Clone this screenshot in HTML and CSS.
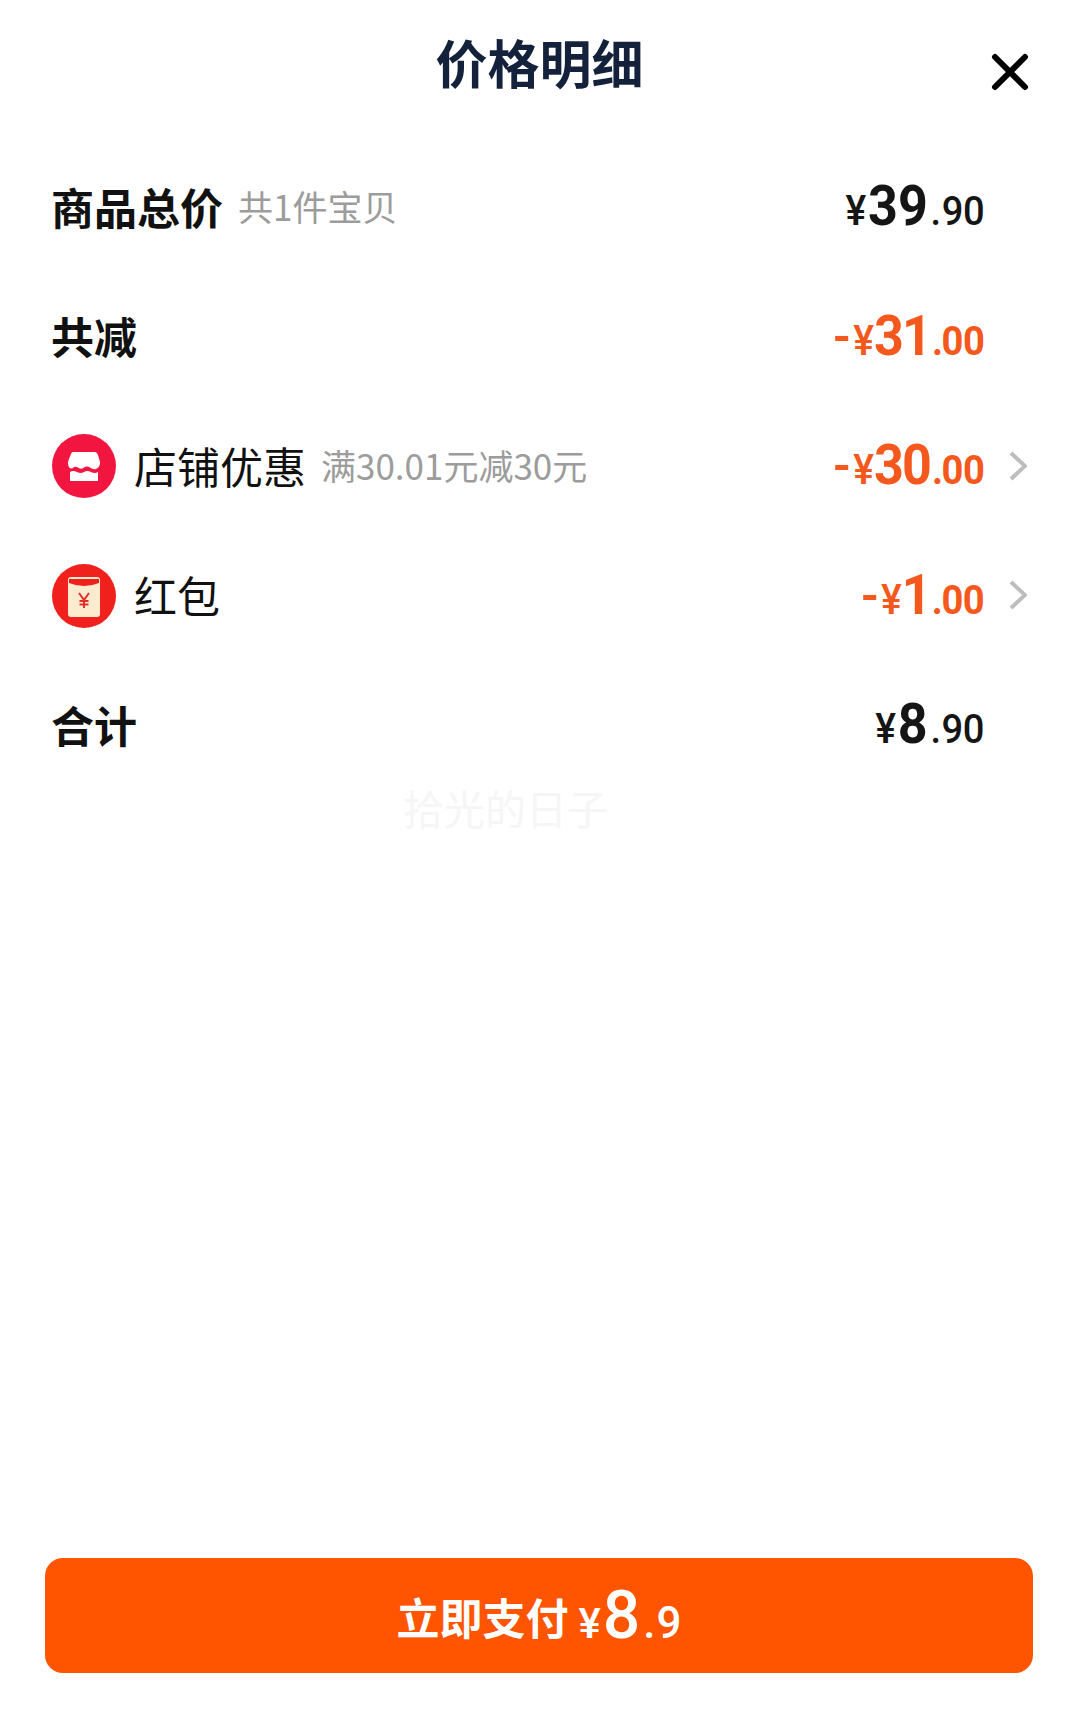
FILE: index.html
```html
<!DOCTYPE html>
<html lang="zh-CN">
<head>
<meta charset="utf-8">
<title>价格明细</title>
<link rel="stylesheet" href="styles.css">
</head>
<body>
<div class="page">
  <header class="header">
    <h1 class="title">价格明细</h1>
    <svg class="close" viewBox="0 0 38 38" width="38" height="38"><path d="M4 4 34 34M34 4 4 34"/></svg>
  </header>
  <main class="list">
    <div class="row">
      <div class="label"><span class="name strong">商品总价</span><span class="note">共1件宝贝</span></div>
      <div class="price"><span class="yen">¥</span><span class="big">39</span><span class="small"><i class="dot">.</i>90</span></div>
      <span class="slot"></span>
    </div>
    <div class="row">
      <div class="label"><span class="name strong">共减</span></div>
      <div class="price minus"><span class="dash">-</span><span class="yen">¥</span><span class="big">31</span><span class="small"><i class="dot">.</i>00</span></div>
      <span class="slot"></span>
    </div>
    <div class="row">
      <div class="label">
        <svg class="badge" viewBox="0 0 64 64" width="64" height="64">
          <circle cx="32" cy="32" r="32" fill="#f21540"/>
          <path d="M21 18H43Q45 18 46 21L48 28Q48.500 33 44 35Q41 36 38 33.500Q35 31.500 32 33.500Q29 36 26 33.500Q23 31.500 20 34.500Q16 34.500 16 29Q16 27 17 25L19 20Q19.500 18 21 18Z" fill="#fff"/>
          <path d="M18 38Q21 36 25 38T32 38T39 38T46 38V47H18Z" fill="#fff"/>
        </svg>
        <span class="name">店铺优惠</span><span class="note">满30.01元减30元</span>
      </div>
      <div class="price minus"><span class="dash">-</span><span class="yen">¥</span><span class="big">30</span><span class="small"><i class="dot">.</i>00</span></div>
      <svg class="slot chevron" viewBox="0 0 43 30" width="43" height="30"><path d="M27 2 41 15 27 28"/></svg>
    </div>
    <div class="row">
      <div class="label">
        <svg class="badge" viewBox="0 0 64 64" width="64" height="64">
          <circle cx="32" cy="32" r="32" fill="#f0201c"/>
          <rect x="16" y="13" width="32" height="40" rx="3" fill="#fdebcf"/>
          <path d="M17 15H47V19Q32 25 17 19Z" fill="#f0201c"/>
          <path d="M27 29 32 36 37 29M32 36V44M27.500 37H36.500M27.500 40.500H36.500" fill="none" stroke="#e0302a" stroke-width="2"/>
        </svg>
        <span class="name">红包</span>
      </div>
      <div class="price minus"><span class="dash">-</span><span class="yen">¥</span><span class="big">1</span><span class="small"><i class="dot">.</i>00</span></div>
      <svg class="slot chevron" viewBox="0 0 43 30" width="43" height="30"><path d="M27 2 41 15 27 28"/></svg>
    </div>
    <div class="row">
      <div class="label"><span class="name strong">合计</span></div>
      <div class="price"><span class="yen">¥</span><span class="big">8</span><span class="small"><i class="dot">.</i>90</span></div>
      <span class="slot"></span>
    </div>
  </main>
  <div class="watermark">拾光的日子</div>
  <footer class="footer">
    <button class="pay"><span class="pay-text">立即支付</span><span class="pay-price"><span class="pay-yen">¥</span><span class="pay-big">8</span><span class="pay-small"><i class="dot">.</i>9</span></span></button>
  </footer>
</div>
</body>
</html>
```
FILE: styles.css
```css
* { box-sizing: border-box; }
html, body { margin: 0; padding: 0; background: #fff; }
body { font-family: "Noto Sans CJK SC", "Noto Sans", sans-serif; color: #111; }
.page { position: relative; display: flex; flex-direction: column; width: 1079px; height: 1716px; overflow: hidden; }

.header { position: relative; display: flex; justify-content: center; height: 143px; padding-top: 27px; }
.title { margin: 0; font-size: 52px; line-height: 70px; font-weight: 700; color: #14213a; }
.close { position: absolute; right: 50px; top: 53px; }
.close path { fill: none; stroke: #000; stroke-width: 6; stroke-linecap: round; }

.list { display: flex; flex-direction: column; margin-top: -1px; padding: 0 52px; }
.row { display: flex; align-items: center; height: 129.500px; }
.label { display: flex; align-items: center; flex: 1; margin-left: -1px; padding-bottom: 2px; }
.name { font-size: 43px; line-height: 60px; font-weight: 400; color: #111; }
.strong { font-weight: 700; }
.note { margin-left: 15px; font-size: 35px; line-height: 60px; color: #9c9c9c; }
.badge { margin: 3px 18px 0 1px; }

.price { display: flex; align-items: baseline; padding-top: 4px; font-family: "Roboto", sans-serif; color: #151515; line-height: 60px; transform: scaleX(.93); transform-origin: right center; }
.price.minus { color: #f4581c; }
.yen { font-size: 42px; font-weight: 500; margin-right: 2px; }
.dash { font-size: 54px; font-weight: 500; margin-right: 3px; }
.big { font-size: 56px; font-weight: 700; }
.small { font-size: 41px; font-weight: 500; letter-spacing: -0.500px; }
.dot { font-style: normal; margin: 0 1px 0 3px; }
.minus .yen { margin-right: 0; }
.minus .big { letter-spacing: -2px; }
.minus .small { font-weight: 700; }
.minus .dot { margin: 0 -1px 0 2px; }
.slot { display: block; flex: none; width: 43px; }
.chevron path { fill: none; stroke: #bdbdbd; stroke-width: 4; }

.watermark { position: absolute; left: 403px; top: 774px; font-size: 41px; line-height: 66px; color: #f6f6f6; }

.footer { margin-top: auto; padding: 0 46px 43px 45px; }
.pay { display: flex; align-items: baseline; justify-content: center; width: 100%; height: 115px; border: 0; border-radius: 18px; background: #ff5500; color: #fff; font-family: inherit; padding: 15px 0 0; line-height: 80px; }
.pay-text { font-size: 43px; font-weight: 700; }
.pay-price { display: flex; align-items: baseline; margin-left: 10px; font-family: "Roboto", sans-serif; font-weight: 500; transform: translateY(3px); }
.pay-yen { font-size: 42px; margin-right: 2px; }
.pay-big { font-size: 66px; }
.pay-small { font-size: 44px; }
```
